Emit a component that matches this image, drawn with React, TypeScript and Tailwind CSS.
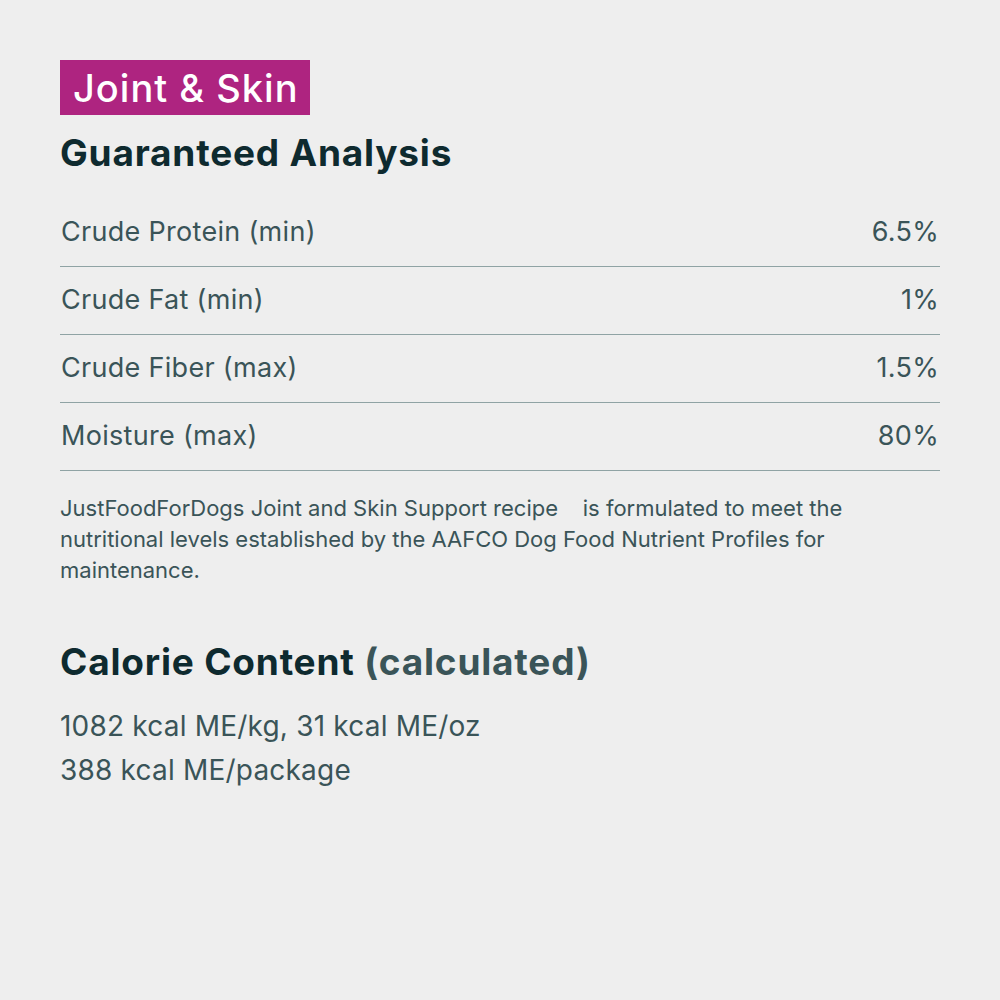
export default function App() {
  const rows = [
    { label: 'Crude Protein (min)', value: '6.5%' },
    { label: 'Crude Fat (min)', value: '1%' },
    { label: 'Crude Fiber (max)', value: '1.5%' },
    { label: 'Moisture (max)', value: '80%' },
  ];
  return (
    <div className="min-h-[1000px] w-[1000px] bg-[#eeeeee] px-[60px] pt-[60px] font-['Inter',sans-serif] text-[#3a5458]">
      <div className="inline-block bg-[#ae2480] pl-[13px] pr-[11px] h-[55px] leading-[57px] text-[38px] font-medium text-white tracking-[1px]">
        Joint &amp; Skin
      </div>
      <h2 className="mt-[17px] text-[37px] leading-[42px] font-bold text-[#0e2a2f] tracking-[0.8px]">Guaranteed Analysis</h2>

      <div className="mt-[25px] w-[880px]">
        {rows.map((r) => (
          <div key={r.label} className="flex items-center justify-between h-[68px] border-b border-[#8fa3a4] text-[27px] tracking-[0.3px]">
            <span className="pl-[1px]">{r.label}</span>
            <span className="pr-[1px]">{r.value}</span>
          </div>
        ))}
      </div>

      <p className="mt-[22px] text-[22px] leading-[31px] w-[800px]">
        JustFoodForDogs Joint and Skin Support recipe&nbsp;&nbsp;&nbsp; is formulated to meet the
        nutritional levels established by the AAFCO Dog Food Nutrient Profiles for maintenance.
      </p>

      <h2 className="mt-[54px] text-[37px] leading-[44px] font-bold text-[#0e2a2f] tracking-[0.8px]">
        Calorie Content <span className="text-[#3a5458]">(calculated)</span>
      </h2>
      <div className="mt-[20px] text-[28px] leading-[44px] tracking-[0.2px]">
        <div>1082 kcal ME/kg, 31 kcal ME/oz</div>
        <div>388 kcal ME/package</div>
      </div>
    </div>
  );
}
